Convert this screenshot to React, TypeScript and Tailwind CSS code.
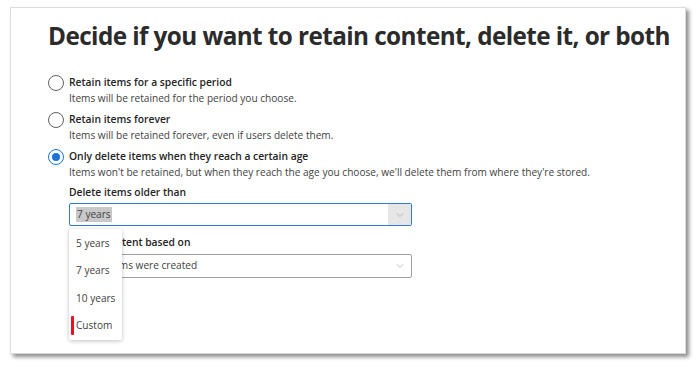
import { ChevronDown } from "lucide-react";

const OPTIONS = [
  {
    title: "Retain items for a specific period",
    desc: "Items will be retained for the period you choose.",
    checked: false,
  },
  {
    title: "Retain items forever",
    desc: "Items will be retained forever, even if users delete them.",
    checked: false,
  },
  {
    title: "Only delete items when they reach a certain age",
    desc: "Items won't be retained, but when they reach the age you choose, we'll delete them from where they're stored.",
    checked: true,
  },
];

const AGES = ["5 years", "7 years", "10 years", "Custom"];

function Radio({ checked }: { checked: boolean }) {
  return (
    <span
      className={`w-[16px] h-[16px] rounded-full border flex items-center justify-center shrink-0 bg-white ${
        checked ? "border-[#1a73d9]" : "border-[#616161]"
      }`}
    >
      {checked && <span className="w-[8px] h-[8px] rounded-full bg-[#1a73d9]" />}
    </span>
  );
}

export default function App() {
  return (
    <div className="w-[698px] h-[368px] bg-white pt-[7px] pl-[10px] font-['Open_Sans',sans-serif] text-[#323130]">
      <div className="w-[676px] h-[347px] bg-white border border-[#dcdcdc] shadow-[3px_3px_4px_rgba(0,0,0,0.45)] pl-[37px] pt-[11px]">
        <h1 className="text-[25px] font-bold tracking-[-0.6px] text-[#2b2b2b] leading-[32px] scale-x-[0.972] origin-left whitespace-nowrap">
          Decide if you want to retain content, delete it, or both
        </h1>

        <div className="mt-[23px] flex flex-col gap-[6px]">
          {OPTIONS.map((o) => (
            <div key={o.title} className="flex gap-[5px]">
              <div className="pt-[1px]">
                <Radio checked={o.checked} />
              </div>
              <div className="flex flex-col">
                <span className="text-[10.3px] font-semibold leading-[17px] text-[#242424]">
                  {o.title}
                </span>
                <span className="text-[10.1px] leading-[14px] text-[#424242]">{o.desc}</span>
              </div>
            </div>
          ))}
        </div>

        <div className="pl-[21px] mt-[6px]">
          <div className="text-[10.3px] font-semibold leading-[14px] text-[#242424]">
            Delete items older than
          </div>
          <div className="relative mt-[4px] w-[343px]">
            <div className="h-[23px] border border-[#2b7cd6] flex items-center rounded-[2px]">
              <span className="ml-[6px] px-[1px] bg-[#c8c8c8] text-[10.1px] text-[#424242] leading-[15px]">
                7 years
              </span>
              <span className="ml-auto h-full w-[23px] bg-[#e6e6e6] flex items-center justify-center">
                <ChevronDown size={12} strokeWidth={1.2} className="text-[#9a9a9a]" />
              </span>
            </div>

            <div className="mt-[9px] text-[10.3px] font-semibold leading-[14px] text-[#242424]">
              Delete content based on
            </div>
            <div className="mt-[5px] h-[24px] border border-[#a0a0a0] flex items-center rounded-[2px]">
              <span className="ml-[7px] text-[10.1px] text-[#424242]">When items were created</span>
              <span className="ml-auto w-[23px] flex items-center justify-center">
                <ChevronDown size={12} strokeWidth={1.2} className="text-[#9a9a9a]" />
              </span>
            </div>

            <div className="absolute left-0 top-[26px] w-[53px] bg-white shadow-[0_1px_4px_rgba(0,0,0,0.25)] rounded-[2px] py-[1px] flex flex-col">
              {AGES.map((a) => (
                <div key={a} className="relative h-[27.3px] flex items-center pl-[7px] text-[10.1px] text-[#424242]">
                  {a === "Custom" && (
                    <span className="absolute left-[2px] top-[4px] bottom-[4px] w-[3px] bg-[#e81123] rounded-[1px]" />
                  )}
                  {a}
                </div>
              ))}
            </div>
          </div>
        </div>
      </div>
    </div>
  );
}
